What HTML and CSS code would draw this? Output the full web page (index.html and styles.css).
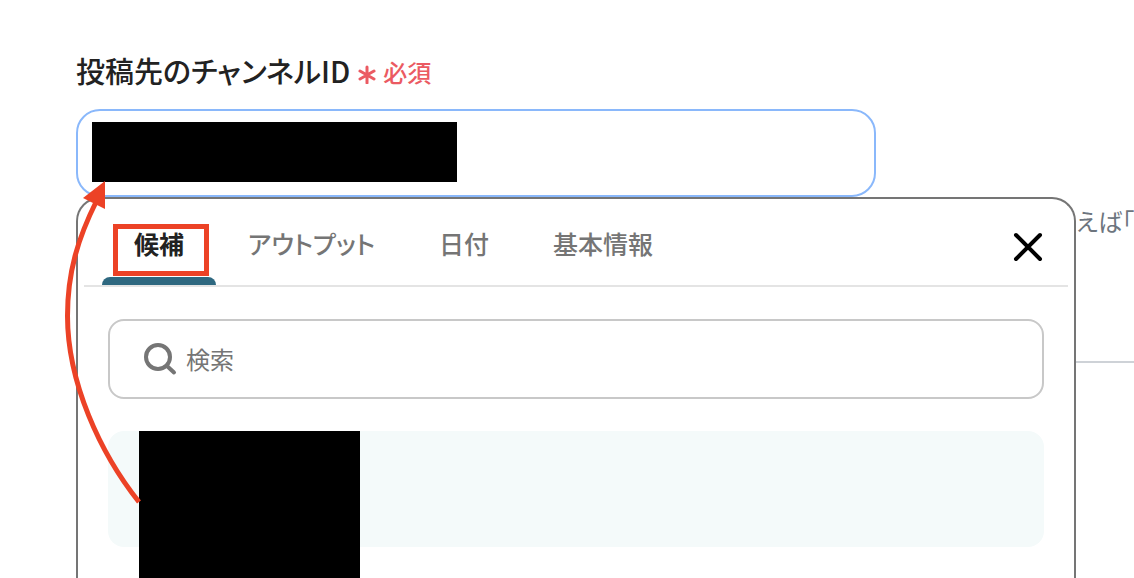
FILE: index.html
```html
<!DOCTYPE html>
<html lang="ja">
<head>
    <meta charset="UTF-8">
    <meta name="viewport" content="width=device-width, initial-scale=1.0">
    <title>投稿先のチャンネルID</title>
    <link rel="stylesheet" href="styles.css">
</head>
<body>
    <main class="page">
        <div class="field-label">
            <label for="channelId">投稿先のチャンネルID</label>
            <span class="required">
                <svg class="required-icon" viewBox="0 0 18 24" aria-hidden="true">
                    <path d="M9 7v16M2 11l14 8M16 11L2 19"/>
                </svg>
                必須
            </span>
        </div>

        <div class="field">
            <div class="text-box">
                <span class="mask"></span>
                <input type="text" id="channelId" name="channelId" autocomplete="off">
            </div>

            <section class="panel">
                <div class="panel-header">
                    <div class="tabs" role="tablist">
                        <button type="button" class="tab active" role="tab" aria-selected="true">候補</button>
                        <button type="button" class="tab" role="tab">アウトプット</button>
                        <button type="button" class="tab" role="tab">日付</button>
                        <button type="button" class="tab" role="tab">基本情報</button>
                    </div>
                    <button type="button" class="close" aria-label="閉じる">
                        <svg viewBox="0 0 32 32" aria-hidden="true">
                            <path d="M4 4l24 24M28 4L4 28"/>
                        </svg>
                    </button>
                </div>

                <div class="panel-body">
                    <label class="search">
                        <svg class="search-icon" viewBox="0 0 34 34" aria-hidden="true">
                            <circle cx="14" cy="15" r="12"/>
                            <path d="M23 24l7 6.500"/>
                        </svg>
                        <input type="search" name="search" placeholder="検索" aria-label="検索">
                    </label>
                    <div class="candidate">
                        <span class="mask candidate-mask"></span>
                    </div>
                </div>
            </section>
        </div>

        <p class="help">えば「</p>
        <hr class="divider">
    </main>

    <!-- 候補から入力欄への矢印 -->
    <svg class="annotation" width="240" height="578" viewBox="0 0 240 578" aria-hidden="true">
        <rect x="115.500" y="226.500" width="91" height="47"/>
        <path d="M139 502C100 453 67.500 382 67.500 316C67.500 272 78 238 97 200"/>
        <polygon points="105,181 83,198 105,209"/>
    </svg>
</body>
</html>
```
FILE: styles.css
```css
* {
    margin: 0;
    padding: 0;
    box-sizing: border-box;
}

body {
    position: relative;
    min-height: 100vh;
    background: #fff;
    color: #222;
    font-family: "Noto Sans CJK JP", sans-serif;
    font-feature-settings: "palt";
    font-size: 24px;
    line-height: 32px;
}

button,
input {
    border: none;
    outline: none;
    background: none;
    color: inherit;
    font: inherit;
    font-feature-settings: inherit;
}

.page {
    padding: 50px 0 0 76px;
}

.field-label {
    display: flex;
    align-items: center;
    gap: 8px;
    height: 40px;
    margin-bottom: 19px;
    font-size: 29px;
    font-weight: 500;
}

.required {
    display: flex;
    align-items: center;
    gap: 7px;
    padding-top: 4px;
    color: #eb5a62;
    font-size: 24px;
}

.required-icon {
    width: 18px;
    height: 24px;
    fill: none;
    stroke: currentColor;
    stroke-width: 3;
    stroke-linecap: round;
}

.field {
    position: relative;
}

.text-box {
    display: flex;
    width: 100%;
    max-width: 800px;
    height: 88px;
    padding: 11px 14px;
    border: 2px solid #8ab8fb;
    border-radius: 24px;
}

.text-box input {
    flex: 1;
    min-width: 0;
    padding-left: 12px;
}

.mask {
    width: 365px;
    height: 60px;
    background: #000;
}

.panel {
    position: absolute;
    top: 100%;
    left: 0;
    right: 58px;
    padding: 0 6px;
    background: #fff;
    border: 2px solid #757575;
    border-bottom: none;
    border-radius: 24px 24px 0 0;
}

.panel-header {
    display: flex;
    justify-content: space-between;
    height: 88px;
    padding: 0 24px 0 18px;
    border-bottom: 2px solid #e4e4e4;
}

.tabs {
    display: flex;
}

.tab {
    position: relative;
    padding: 2px 32px 0;
    color: #757575;
    font-size: 25px;
    font-weight: 500;
    cursor: pointer;
}

.tab.active {
    color: #222;
    font-weight: 700;
}

.tab.active::after {
    content: "";
    position: absolute;
    left: 0;
    right: 0;
    bottom: 0;
    height: 8px;
    background: #2e6880;
    border-radius: 8px 8px 0 0;
}

.close {
    align-self: center;
    width: 32px;
    height: 32px;
    margin-top: 10px;
    cursor: pointer;
}

.close svg {
    display: block;
    fill: none;
    stroke: #000;
    stroke-width: 4;
    stroke-linecap: round;
}

.panel-body {
    padding: 32px 24px 31px;
}

.search {
    display: flex;
    align-items: center;
    gap: 8px;
    height: 80px;
    padding: 0 34px;
    margin-bottom: 32px;
    border: 2px solid #c8c8c8;
    border-radius: 16px;
}

.search-icon {
    width: 34px;
    height: 34px;
    fill: none;
    stroke: #757575;
    stroke-width: 4;
    stroke-linecap: round;
}

.search input {
    flex: 1;
    min-width: 0;
}

.search input::placeholder {
    color: #757575;
    opacity: 1;
}

.candidate {
    position: relative;
    height: 116px;
    background: #f4fafa;
    border-radius: 16px;
}

.candidate-mask {
    position: absolute;
    top: 0;
    left: 31px;
    width: 221px;
    height: 147px;
}

.help {
    margin: 8px 0 124px;
    color: #6d757e;
    text-align: right;
}

.divider {
    border: none;
    border-top: 2px solid #ced2d7;
}

.annotation {
    position: absolute;
    top: 0;
    left: 0;
    fill: none;
    stroke: #ec4226;
    stroke-width: 5;
    pointer-events: none;
}

.annotation polygon {
    fill: #ec4226;
    stroke: none;
}
```
